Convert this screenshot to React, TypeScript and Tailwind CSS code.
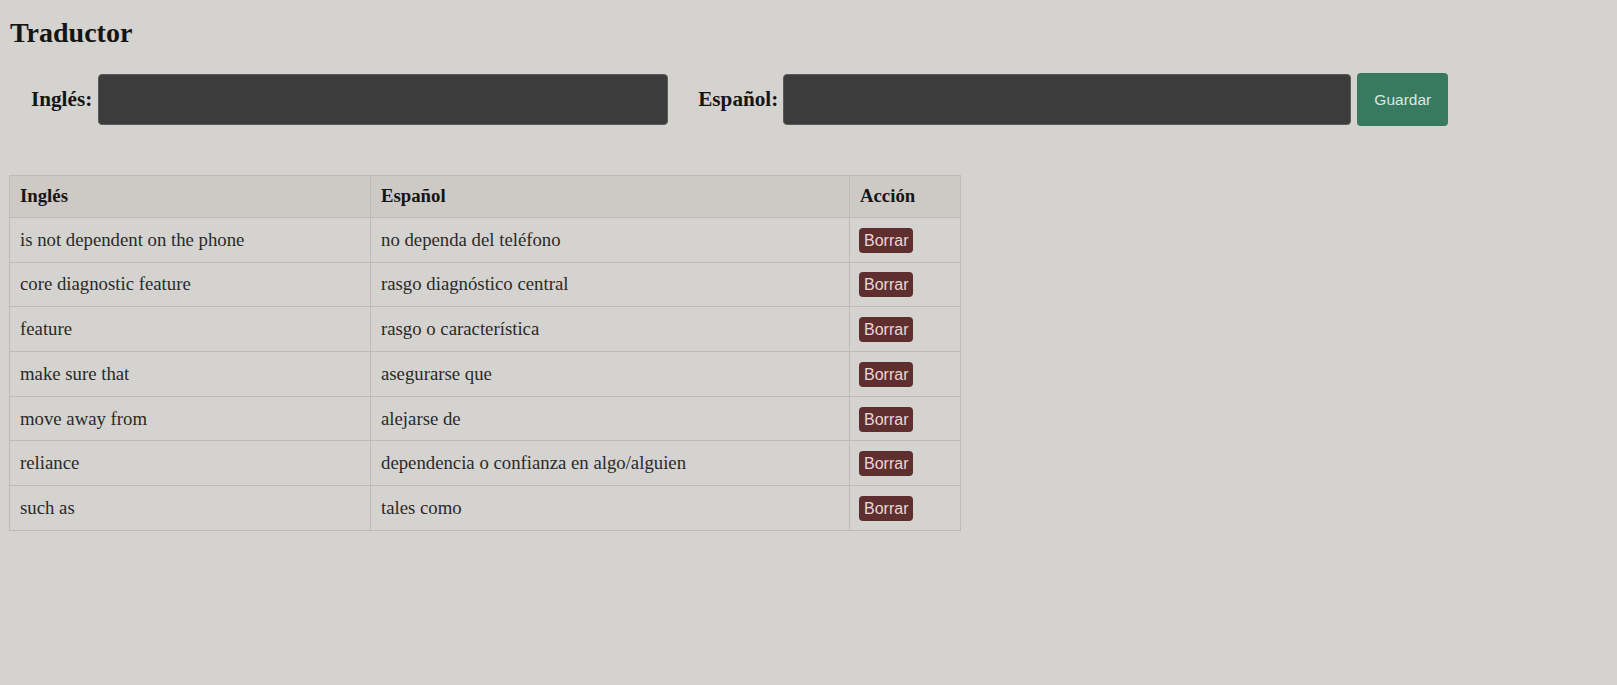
import { useState } from 'react';

type Entry = { en: string; es: string };

const initial: Entry[] = [
  { en: 'is not dependent on the phone', es: 'no dependa del teléfono' },
  { en: 'core diagnostic feature', es: 'rasgo diagnóstico central' },
  { en: 'feature', es: 'rasgo o característica' },
  { en: 'make sure that', es: 'asegurarse que' },
  { en: 'move away from', es: 'alejarse de' },
  { en: 'reliance', es: 'dependencia o confianza en algo/alguien' },
  { en: 'such as', es: 'tales como' },
];

export default function App() {
  const [rows, setRows] = useState<Entry[]>(initial);
  const [en, setEn] = useState('');
  const [es, setEs] = useState('');

  const save = () => {
    if (!en.trim() || !es.trim()) return;
    setRows([...rows, { en, es }]);
    setEn('');
    setEs('');
  };

  return (
    <div className="min-h-screen bg-[#d4d3cf] px-[9px] pt-[17px] font-['Liberation_Serif',serif] text-[#1a1a1a]">
      <h2 className="pl-[1px] text-[28px] leading-[31px] font-bold text-[#151515]">Traductor</h2>

      <div className="mt-[25px] flex h-[53px] items-center pl-[22px]">
        <label className="mr-[6px] text-[21.2px] font-bold text-[#151515]">Inglés:</label>
        <input
          value={en}
          onChange={(e) => setEn(e.target.value)}
          className="h-[51px] w-[570px] rounded-[4px] border border-[#5a5a5a] bg-[#3c3c3c] px-2 text-white outline-none"
        />
        <label className="mr-[5px] ml-[30px] text-[21.2px] font-bold text-[#151515]">Español:</label>
        <input
          value={es}
          onChange={(e) => setEs(e.target.value)}
          className="h-[51px] w-[568px] rounded-[4px] border border-[#5a5a5a] bg-[#3c3c3c] px-2 text-white outline-none"
        />
        <button
          onClick={save}
          className="ml-[6px] h-[53px] w-[91px] rounded-[4px] bg-[#377a5f] font-['Liberation_Sans',sans-serif] text-[15.5px] text-[#dbe8e1]"
        >
          Guardar
        </button>
      </div>

      <table className="mt-[49px] border-collapse border border-[#bebbb7] text-[18.75px]">
        <thead>
          <tr className="h-[42px] bg-[#cdc9c5]">
            <th className="w-[361px] border border-[#bebbb7] px-[10px] text-left font-bold text-[#151515]">Inglés</th>
            <th className="w-[479px] border border-[#bebbb7] px-[10px] text-left font-bold text-[#151515]">Español</th>
            <th className="w-[111px] border border-[#bebbb7] px-[10px] text-left font-bold text-[#151515]">Acción</th>
          </tr>
        </thead>
        <tbody>
          {rows.map((r, i) => (
            <tr key={i} className="h-[44.7px]">
              <td className="border border-[#bebbb7] px-[10px] text-[#2a2a2a]">{r.en}</td>
              <td className="border border-[#bebbb7] px-[10px] text-[#2a2a2a]">{r.es}</td>
              <td className="border border-[#bebbb7] px-[9px]">
                <button
                  onClick={() => setRows(rows.filter((_, j) => j !== i))}
                  className="h-[25px] rounded-[4px] bg-[#5f2f2f] px-[5px] font-['Liberation_Sans',sans-serif] text-[16px] leading-[25px] text-[#e8d8d8]"
                >
                  Borrar
                </button>
              </td>
            </tr>
          ))}
        </tbody>
      </table>
    </div>
  );
}
